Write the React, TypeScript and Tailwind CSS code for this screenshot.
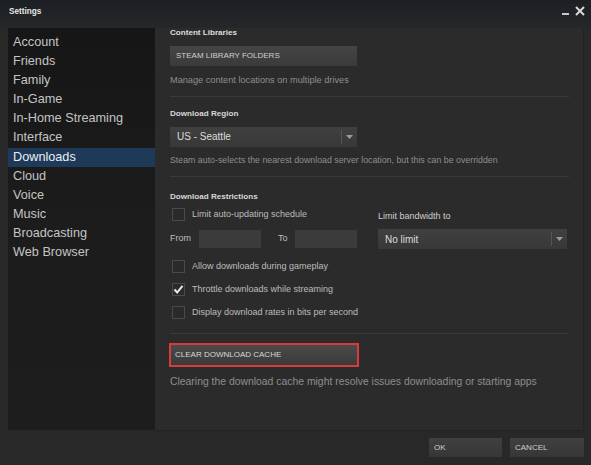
import React from "react";

const navItems = [
  "Account",
  "Friends",
  "Family",
  "In-Game",
  "In-Home Streaming",
  "Interface",
  "Downloads",
  "Cloud",
  "Voice",
  "Music",
  "Broadcasting",
  "Web Browser",
];

const Checkbox: React.FC<{ checked?: boolean; label: string }> = ({
  checked,
  label,
}) => (
  <div className="flex items-center h-[14px] ml-[2px]">
    <div className="w-[13px] h-[13px] border border-[#4a4a4a] bg-[#2a2a2a] flex items-center justify-center">
      {checked && (
        <svg width="11" height="11" viewBox="0 0 11 11">
          <path
            d="M1.5 5.5 L4.2 8.5 L9.5 1.8"
            fill="none"
            stroke="#e8e8e8"
            strokeWidth="2"
          />
        </svg>
      )}
    </div>
    <span className="ml-[7px] text-[9px] text-[#bdbdbd]">{label}</span>
  </div>
);

const Dropdown: React.FC<{ value: string; width: string }> = ({
  value,
  width,
}) => (
  <div
    className={`${width} h-[20px] bg-gradient-to-b from-[#404040] to-[#383838] flex items-center`}
  >
    <span className="flex-1 pl-[7px] text-[10px] text-[#dcdcdc]">{value}</span>
    <div className="w-[1px] h-[14px] bg-[#555]" />
    <div className="w-[15px] flex justify-center">
      <svg width="7" height="4" viewBox="0 0 7 4">
        <path d="M0 0 L7 0 L3.5 4 Z" fill="#9a9a9a" />
      </svg>
    </div>
  </div>
);

const Separator = () => <div className="h-[1px] bg-[#3a3a3a] mr-[14px]" />;

export default function App() {
  return (
    <div
      className="w-[591px] h-[465px] bg-[#282828] flex flex-col overflow-hidden"
      style={{ fontFamily: '"Liberation Sans", Arial, sans-serif' }}
    >
      {/* Title bar */}
      <div className="h-[28px] shrink-0 bg-gradient-to-b from-[#1c1f24] to-[#26272a] flex items-center pl-[9px] pr-[6px]">
        <span className="text-[8.2px] font-bold text-[#e6e6e6] -mt-[4px]">
          Settings
        </span>
        <div className="flex-1" />
        <div className="flex items-center gap-[6px] -mt-[6px]">
          <div className="w-[7px] h-[2px] bg-[#c8c8c8] mt-[6px]" />
          <svg width="10" height="10" viewBox="0 0 10 10">
            <path
              d="M1 1 L9 9 M9 1 L1 9"
              stroke="#d8d8d8"
              strokeWidth="2"
            />
          </svg>
        </div>
      </div>

      {/* Body */}
      <div className="flex flex-1 min-h-0 pl-[8px] pr-[7px]">
        {/* Sidebar */}
        <div className="w-[147px] h-[402px] bg-gradient-to-b from-[#161616] via-[#1c1c1c] to-[#1d1d1e] pt-[5px]">
          {navItems.map((item) => (
            <div
              key={item}
              className={`h-[19.1px] flex items-center pl-[5px] text-[12.7px] ${
                item === "Downloads"
                  ? "bg-[#1f3a58] text-[#e8eef5]"
                  : "text-[#c4c4c4]"
              }`}
            >
              {item}
            </div>
          ))}
        </div>

        {/* Content */}
        <div className="flex-1 h-[403px] bg-[#2b2b2b] border-r border-b border-[#232323] pl-[15px]">
          <div className="text-[8.1px] font-bold text-[#dedede] leading-[10px]">
            Content Libraries
          </div>
          <div className="mt-[8px] w-[187px] h-[20px] bg-gradient-to-b from-[#454545] to-[#3b3b3b] flex items-center pl-[6px] text-[8px] text-[#d0d0d0]">
            STEAM LIBRARY FOLDERS
          </div>
          <div className="mt-[8px] text-[9.2px] text-[#8e8e8e]">
            Manage content locations on multiple drives
          </div>
          <div className="mt-[8px]">
            <Separator />
          </div>

          <div className="mt-[12px] text-[8.1px] font-bold text-[#d8d8d8] leading-[10px]">
            Download Region
          </div>
          <div className="mt-[8px]">
            <Dropdown value="US - Seattle" width="w-[187px]" />
          </div>
          <div className="mt-[7px] text-[8.8px] text-[#8e8e8e]">
            Steam auto-selects the nearest download server location, but this
            can be overridden
          </div>
          <div className="mt-[9px]">
            <Separator />
          </div>

          <div className="mt-[15px] text-[8.1px] font-bold text-[#d8d8d8] leading-[10px]">
            Download Restrictions
          </div>

          <div className="flex mt-[6px]">
            <div className="w-[208px]">
              <Checkbox label="Limit auto-updating schedule" />
              <div className="flex items-center mt-[8px]">
                <span className="text-[9px] text-[#bdbdbd] w-[29px]">From</span>
                <div className="w-[62px] h-[18px] bg-[#3b3b3b]" />
                <span className="text-[9px] text-[#bdbdbd] ml-[17px] w-[17px]">
                  To
                </span>
                <div className="w-[62px] h-[18px] bg-[#3b3b3b]" />
              </div>
            </div>
            <div>
              <div className="mt-[2px] text-[9px] text-[#cfcfcf]">
                Limit bandwidth to
              </div>
              <div className="mt-[6px]">
                <Dropdown value="No limit" width="w-[189px]" />
              </div>
            </div>
          </div>

          <div className="mt-[10px] flex flex-col gap-[9px]">
            <Checkbox label="Allow downloads during gameplay" />
            <Checkbox checked label="Throttle downloads while streaming" />
            <Checkbox label="Display download rates in bits per second" />
          </div>

          <div className="mt-[14px]">
            <Separator />
          </div>

          <div className="mt-[9px] w-[190px] h-[24px] border-2 border-[#d63c3c] -ml-[1px]">
            <div className="h-full bg-gradient-to-b from-[#4a4a4a] to-[#3a3a3a] flex items-center pl-[4px] text-[8px] text-[#d8d8d8]">
              CLEAR DOWNLOAD CACHE
            </div>
          </div>
          <div className="mt-[7px] text-[10.4px] text-[#8e8e8e]">
            Clearing the download cache might resolve issues downloading or
            starting apps
          </div>
        </div>
      </div>

      {/* Footer */}
      <div className="h-[34px] shrink-0 flex items-start justify-end gap-[8px] pr-[7px] pt-[7px] -mt-[1px]">
        <div className="w-[73px] h-[19px] bg-gradient-to-b from-[#404040] to-[#363636] flex items-center pl-[5px] text-[8px] text-[#cfcfcf]">
          OK
        </div>
        <div className="w-[74px] h-[19px] bg-gradient-to-b from-[#404040] to-[#363636] flex items-center pl-[5px] text-[8px] text-[#cfcfcf]">
          CANCEL
        </div>
      </div>
    </div>
  );
}
